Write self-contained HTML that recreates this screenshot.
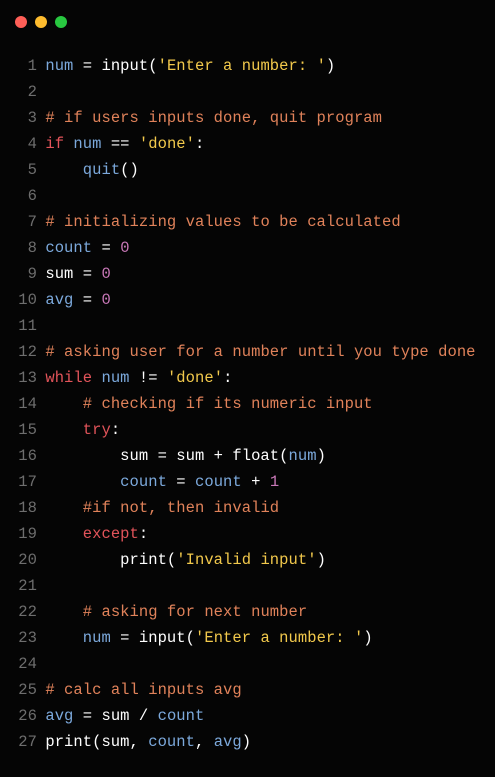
<!DOCTYPE html>
<html><head><style>
body{margin:0;background:#050505;width:495px;height:777px;overflow:hidden}
.d{position:absolute;top:16px;width:12px;height:12px;border-radius:50%}
pre{position:absolute;left:0;top:53px;margin:0;font-family:"Liberation Mono",monospace;font-size:15.5px;line-height:26px;color:#fff;letter-spacing:0.05px}
.n{display:inline-block;width:37px;text-align:right;color:#6e6e6e;margin-right:-1px}
.v{color:#7ca9dc}.s{color:#f2c94c}.c{color:#e0825a}.k{color:#e2545a}.m{color:#c978b8}
</style></head><body>
<div class="d" style="left:15px;background:#ff5f57"></div>
<div class="d" style="left:35px;background:#febc2e"></div>
<div class="d" style="left:55px;background:#28c840"></div>
<pre><span class="n">1</span> <span class="v">num</span> = input(<span class="s">'Enter a number: '</span>)
<span class="n">2</span>
<span class="n">3</span> <span class="c"># if users inputs done, quit program</span>
<span class="n">4</span> <span class="k">if</span> <span class="v">num</span> == <span class="s">'done'</span>:
<span class="n">5</span>     <span class="v">quit</span>()
<span class="n">6</span>
<span class="n">7</span> <span class="c"># initializing values to be calculated</span>
<span class="n">8</span> <span class="v">count</span> = <span class="m">0</span>
<span class="n">9</span> sum = <span class="m">0</span>
<span class="n">10</span> <span class="v">avg</span> = <span class="m">0</span>
<span class="n">11</span>
<span class="n">12</span> <span class="c"># asking user for a number until you type done</span>
<span class="n">13</span> <span class="k">while</span> <span class="v">num</span> != <span class="s">'done'</span>:
<span class="n">14</span>     <span class="c"># checking if its numeric input</span>
<span class="n">15</span>     <span class="k">try</span>:
<span class="n">16</span>         sum = sum + float(<span class="v">num</span>)
<span class="n">17</span>         <span class="v">count</span> = <span class="v">count</span> + <span class="m">1</span>
<span class="n">18</span>     <span class="c">#if not, then invalid</span>
<span class="n">19</span>     <span class="k">except</span>:
<span class="n">20</span>         print(<span class="s">'Invalid input'</span>)
<span class="n">21</span>
<span class="n">22</span>     <span class="c"># asking for next number</span>
<span class="n">23</span>     <span class="v">num</span> = input(<span class="s">'Enter a number: '</span>)
<span class="n">24</span>
<span class="n">25</span> <span class="c"># calc all inputs avg</span>
<span class="n">26</span> <span class="v">avg</span> = sum / <span class="v">count</span>
<span class="n">27</span> print(sum, <span class="v">count</span>, <span class="v">avg</span>)</pre>
</body></html>
